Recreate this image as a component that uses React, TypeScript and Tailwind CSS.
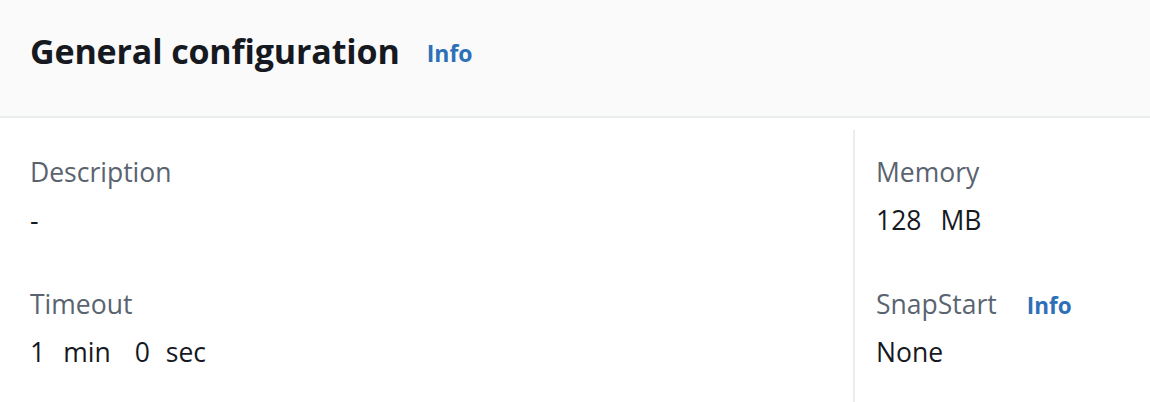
export default function App() {
  const font = { fontFamily: '"Open Sans", "Noto Sans", sans-serif' };

  return (
    <div className="w-[1150px] h-[402px] bg-white overflow-hidden" style={font}>
      <div className="h-[118px] bg-[#fafafa] border-b-2 border-[#eaeded] flex items-center pl-[30px] pb-[13px]">
        <h2 className="text-[34px] font-bold text-[#16191f] tracking-[-0.15px]">General configuration</h2>
        <a className="ml-[27px] mt-[4px] text-[23px] font-bold text-[#2d70b7]">Info</a>
      </div>
      <div className="flex pt-[12px]">
        <div className="w-[853px] pl-[30px] pt-[25px]">
          <Field label="Description">
            <span>-</span>
          </Field>
          <div className="mt-[48px]">
            <Field label="Timeout">
              <span>1</span>
              <span className="ml-[18px]">min</span>
              <span className="ml-[24px]">0</span>
              <span className="ml-[16px]">sec</span>
            </Field>
          </div>
        </div>
        <div className="flex-1 border-l-2 border-[#eaeded] pl-[21px] pt-[25px] h-[272px]">
          <Field label="Memory">
            <span>128</span>
            <span className="ml-[19px]">MB</span>
          </Field>
          <div className="mt-[48px]">
            <Field label="SnapStart" info>
              <span>None</span>
            </Field>
          </div>
        </div>
      </div>
    </div>
  );
}

function Field({ label, info, children }: { label: string; info?: boolean; children: React.ReactNode }) {
  return (
    <div>
      <div className="flex items-center h-[36px]">
        <span className="text-[26.5px] text-[#5a6370]">{label}</span>
        {info && <a className="ml-[30px] mt-[2px] text-[22.5px] font-bold text-[#2d70b7]">Info</a>}
      </div>
      <div className="mt-[12px] h-[36px] flex items-center text-[26.5px] text-[#16191f]">{children}</div>
    </div>
  );
}
